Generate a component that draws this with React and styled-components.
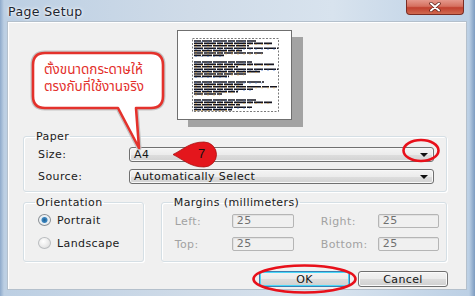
import React from "react";
import styled, { createGlobalStyle } from "styled-components";

const GlobalStyle = createGlobalStyle`
  html, body {
    margin: 0;
    padding: 0;
    background: #c9d7e6;
  }
  body {
    font-family: "DejaVu Sans", "Liberation Sans", sans-serif;
  }
`;

const Window = styled.div`
  position: relative;
  width: 475px;
  height: 296px;
  box-sizing: border-box;
  padding: 0 8px 6px 7px;
  display: flex;
  flex-direction: column;
  overflow: hidden;
  background: linear-gradient(90deg, #8eaacb 0px, #bccfe3 4px, #cfdbe8 40%, #d8e3ee 70%, #bcd0e5 calc(100% - 6px), #7c9bc0 100%);
`;

const TitleBar = styled.div`
  height: 21px;
  display: flex;
  align-items: flex-start;
  justify-content: space-between;
`;

const Title = styled.div`
  margin: 4px 0 0 1px;
  font-size: 12.5px;
  letter-spacing: 0.4px;
  color: #1c2530;
  text-shadow: 0 0 4px #ffffff, 0 0 2px #ffffff;
`;

const CloseButton = styled.div`
  width: 58px;
  height: 15px;
  margin-right: 3px;
  box-sizing: border-box;
  border: 1px solid #7a2d24;
  border-top: none;
  border-radius: 0 0 4px 4px;
  background: linear-gradient(180deg, #e5988c 0%, #d5705f 45%, #c1402f 55%, #d06a50 100%);
  display: flex;
  align-items: center;
  justify-content: center;
`;

const Client = styled.div`
  flex: 1;
  display: flex;
  flex-direction: column;
  border: 1px solid #b4c0cc;
  box-shadow: inset 1px 1px 0 #ffffff;
  background: #f0f0f0;
  font-size: 11px;
  letter-spacing: 0.4px;
  color: #1b1b1b;
`;

const PreviewArea = styled.div`
  height: 90px;
  margin-top: 8px;
  padding-left: 169px;
`;

const PageThumb = styled.div`
  width: 115px;
  height: 90px;
  box-sizing: border-box;
  border: 1px solid #6f6f6f;
  background: #ffffff;
  box-shadow: 11px 7px 0 #a3a3a3;
`;

const Group = styled.fieldset`
  margin: ${(p) => p.$margin || "0"};
  padding: ${(p) => p.$padding || "4px 12px 7px 11px"};
  min-width: 0;
  width: ${(p) => (p.$width ? `${p.$width}px` : "auto")};
  box-sizing: border-box;
  border: 1px solid #d5dfe5;
  border-radius: 3px;
  box-shadow: inset 1px 1px 0 #ffffff, 1px 1px 0 #ffffff;
  display: flex;
  flex-direction: column;
  gap: ${(p) => p.$gap || 7}px;
`;

const Legend = styled.legend`
  padding: 0 1px;
  font-size: 11px;
  line-height: 13px;
  color: #1b1b1b;
`;

const FieldRow = styled.div`
  display: flex;
  align-items: center;
  height: 15px;
`;

const FieldLabel = styled.span`
  width: 91px;
  margin-left: 3px;
  flex: none;
`;

const Combo = styled.div`
  flex: 1;
  height: 15px;
  box-sizing: border-box;
  border: 1px solid #707070;
  border-radius: 3px;
  background: linear-gradient(180deg, #f4f4f4 0%, #ececec 50%, #dedede 51%, #d2d2d2 100%);
  box-shadow: inset 0 0 0 1px #f8f8f8;
  display: flex;
  align-items: center;
  justify-content: space-between;
  padding: 0 5px 0 4px;
  line-height: 13px;
  color: #151515;
`;

const ComboArrow = styled.span`
  width: 0;
  height: 0;
  border-left: 4px solid transparent;
  border-right: 4px solid transparent;
  border-top: 4px solid #111111;
  margin-top: 1px;
`;

const GroupRow = styled.div`
  display: flex;
  margin: 4px 19px 0 15px;
  gap: 17px;
`;

const RadioRow = styled.label`
  display: flex;
  align-items: center;
  height: 14px;
  gap: 6px;
`;

const Radio = styled.span`
  width: 13px;
  height: 12px;
  margin-left: 3px;
  box-sizing: border-box;
  border-radius: 50%;
  border: 1px solid ${(p) => (p.$checked ? "#8a8f94" : "#b9bcbf")};
  background: ${(p) =>
    p.$checked
      ? "radial-gradient(circle at 50% 50%, #1f5d8f 0, #3b86c0 2.5px, #e8eef3 3.5px, #f6f6f6 100%)"
      : "radial-gradient(circle at 40% 35%, #ffffff 0, #e4e4e4 70%, #d4d4d4 100%)"};
`;

const MarginGrid = styled.div`
  display: grid;
  grid-template-columns: 57px 89px 57px 61px;
  row-gap: 9px;
  margin-left: 2px;
  align-items: center;
`;

const DimLabel = styled.span`
  color: #a2a2a2;
`;

const NumBox = styled.div`
  width: ${(p) => p.$w}px;
  height: 14px;
  box-sizing: border-box;
  border: 1px solid #b5b5b5;
  border-radius: 2px;
  box-shadow: inset 1px 1px 0 #e2e2e2;
  background: #f0f0f0;
  color: #707070;
  padding-left: 4px;
  line-height: 12px;
`;

const ButtonRow = styled.div`
  display: flex;
  justify-content: flex-end;
  gap: 8px;
  margin: 9px 18px 0 0;
`;

const Button = styled.div`
  width: ${(p) => p.$w}px;
  height: 16px;
  box-sizing: border-box;
  border: 1px solid ${(p) => (p.$primary ? "#3c7fb1" : "#707070")};
  border-radius: 3px;
  background: linear-gradient(180deg, #f3f3f3 0%, #ebebeb 50%, #dddddd 51%, #cfcfcf 100%);
  box-shadow: inset 0 0 0 1px ${(p) => (p.$primary ? "#48d7f9" : "#fbfbfb")};
  display: flex;
  align-items: center;
  justify-content: center;
  color: #151515;
`;

const Overlay = styled.svg`
  position: absolute;
  left: 0;
  top: 0;
  pointer-events: none;
`;

const BubbleText = styled.div`
  position: absolute;
  left: 44px;
  top: 62px;
  width: 116px;
  font-family: "Noto Sans Thai", "Loma", "Garuda", "Noto Sans", sans-serif;
  font-size: 13.5px;
  line-height: 17px;
  color: #e3302b;
  letter-spacing: 0;
`;

const MarkerNum = styled.span`
  position: absolute;
  left: 198px;
  top: 146px;
  font-family: "Liberation Sans", sans-serif;
  font-size: 13px;
  line-height: 15px;
  color: #111111;
`;

const blocks = [
  { y: 10, widths: [62, 78, 55, 84, 48, 70, 30] },
  { y: 31, widths: [58, 80, 44, 84, 66, 52, 35] },
  { y: 51, widths: [70, 49, 83, 60, 44, 28] },
  { y: 69, widths: [62, 78, 46, 58, 38] },
];

const Thumbnail = () => (
  <svg width="113" height="88" viewBox="0 0 113 88">
    <rect x="14.5" y="7.5" width="86" height="73" fill="none" stroke="#7a7a7a" strokeDasharray="2 1.5" />
    {blocks.map((b, bi) =>
      b.widths.map((w, i) => (
        <g key={`${bi}-${i}`}>
          <line
            x1="16"
            x2={16 + w}
            y1={b.y + i * 2.4}
            y2={b.y + i * 2.4}
            stroke="#14141f"
            strokeWidth="1.6"
            strokeDasharray={i % 2 ? "9 1 12 1 6 1" : "7 1 10 1 14 1"}
          />
          <line
            x1="17"
            x2={14 + w}
            y1={b.y + i * 2.4 + 1}
            y2={b.y + i * 2.4 + 1}
            stroke={i % 3 ? "#d9a040" : "#4a78c8"}
            strokeWidth="0.6"
            strokeDasharray="2 4"
          />
        </g>
      ))
    )}
  </svg>
);

const App = () => {
  return (
    <>
      <GlobalStyle />
      <Window>
        <TitleBar>
          <Title>Page Setup</Title>
          <CloseButton>
            <svg width="12" height="10" viewBox="0 0 12 10">
              <path d="M2 1.5 L10 8.5 M10 1.5 L2 8.5" stroke="#5a2018" strokeWidth="3.4" strokeLinecap="round" />
              <path d="M2 1.5 L10 8.5 M10 1.5 L2 8.5" stroke="#ffffff" strokeWidth="2" strokeLinecap="round" />
            </svg>
          </CloseButton>
        </TitleBar>
        <Client>
          <PreviewArea>
            <PageThumb>
              <Thumbnail />
            </PageThumb>
          </PreviewArea>

          <Group $margin="10px 19px 0 15px">
            <Legend>Paper</Legend>
            <FieldRow>
              <FieldLabel>Size:</FieldLabel>
              <Combo>
                <span>A4</span>
                <ComboArrow />
              </Combo>
            </FieldRow>
            <FieldRow>
              <FieldLabel>Source:</FieldLabel>
              <Combo>
                <span>Automatically Select</span>
                <ComboArrow />
              </Combo>
            </FieldRow>
          </Group>

          <GroupRow>
            <Group $width={121} $padding="4px 8px 10px 11px" $gap={9}>
              <Legend>Orientation</Legend>
              <RadioRow>
                <Radio $checked />
                <span>Portrait</span>
              </RadioRow>
              <RadioRow>
                <Radio />
                <span>Landscape</span>
              </RadioRow>
            </Group>
            <Group $width={287} $padding="5px 8px 10px 11px">
              <Legend>Margins (millimeters)</Legend>
              <MarginGrid>
                <DimLabel>Left:</DimLabel>
                <NumBox $w={62}>25</NumBox>
                <DimLabel>Right:</DimLabel>
                <NumBox $w={61}>25</NumBox>
                <DimLabel>Top:</DimLabel>
                <NumBox $w={62}>25</NumBox>
                <DimLabel>Bottom:</DimLabel>
                <NumBox $w={61}>25</NumBox>
              </MarginGrid>
            </Group>
          </GroupRow>

          <ButtonRow>
            <Button $w={91} $primary>OK</Button>
            <Button $w={90}>Cancel</Button>
          </ButtonRow>
        </Client>

        <Overlay width="475" height="296" viewBox="0 0 475 296">
          <path
            d="M45 53 H151 Q163 53 163 65 V96 Q163 108 151 108 H136 L139 148 L118 108 H45 Q33 108 33 96 V65 Q33 53 45 53 Z"
            fill="#ffffff"
            stroke="#c4c4c4"
            strokeWidth="5"
            strokeLinejoin="round"
          />
          <path
            d="M45 53 H151 Q163 53 163 65 V96 Q163 108 151 108 H136 L139 148 L118 108 H45 Q33 108 33 96 V65 Q33 53 45 53 Z"
            fill="#ffffff"
            stroke="#e4322c"
            strokeWidth="2.6"
            strokeLinejoin="round"
          />
          <path
            d="M173 154.5 C184 149 190 142 204 142 A12.5 12.5 0 0 1 204 167 C190 167 184 160 173 154.5 Z"
            fill="#e4161c"
            stroke="#a81010"
            strokeWidth="0.8"
          />
          <ellipse cx="421" cy="150.5" rx="17.5" ry="10.5" fill="none" stroke="#e8101a" strokeWidth="2.6" />
          <ellipse cx="304.5" cy="279" rx="51" ry="13.5" fill="none" stroke="#e8101a" strokeWidth="2.6" />
        </Overlay>
        <BubbleText>
          ตั้งขนาดกระดาษให้
          <br />
          ตรงกับที่ใช้งานจริง
        </BubbleText>
        <MarkerNum>7</MarkerNum>
      </Window>
    </>
  );
};

export default App;
